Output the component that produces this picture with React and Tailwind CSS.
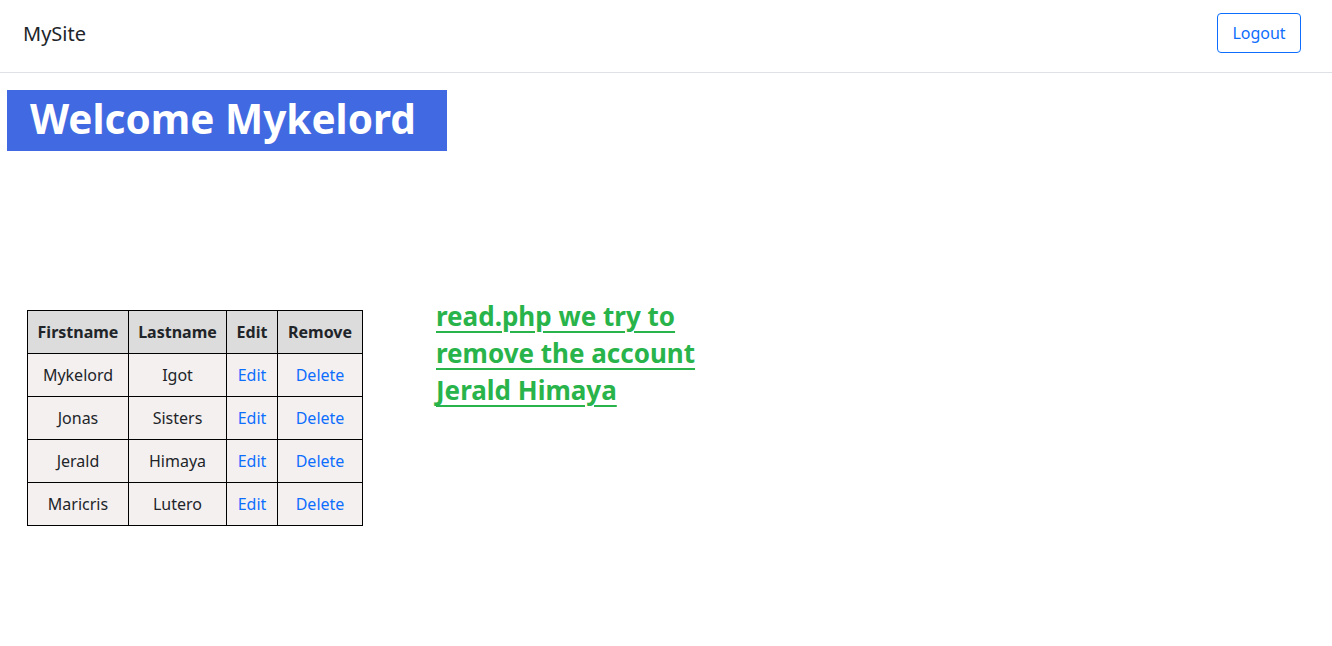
import React from 'react'

const rows = [
	['Mykelord', 'Igot'],
	['Jonas', 'Sisters'],
	['Jerald', 'Himaya'],
	['Maricris', 'Lutero'],
]

export default function App() {
	return (
		<div className="min-h-[646px] bg-white text-[#212529]" style={{ fontFamily: '"Noto Sans", "Open Sans", sans-serif' }}>
			{/* navbar */}
			<header className="flex items-start justify-between h-[73px] border-b border-[#dee2e6] pl-[23px] pr-[31px] pt-[13px]">
				<span className="text-[20px] leading-[42px]">MySite</span>
				<button className="h-[40px] w-[84px] border border-[#0d6efd] rounded-[4px] text-[#0d6efd] text-[16px]">
					Logout
				</button>
			</header>

			<div className="pt-[17px] pl-[7px]">
				<h1 className="w-[440px] h-[61px] bg-[#4169e1] text-white font-bold text-[40.5px] leading-[58px] pl-[23px]">
					Welcome Mykelord
				</h1>
			</div>

			<div className="flex items-start pl-[27px] pt-[159px] gap-[73px]">
				<table className="border-collapse text-[16px] text-center">
					<thead>
						<tr className="bg-[#dcdcdc] h-[43px] font-bold">
							<th className="border border-black w-[101px]">Firstname</th>
							<th className="border border-black w-[98px]">Lastname</th>
							<th className="border border-black w-[51px]">Edit</th>
							<th className="border border-black w-[85px]">Remove</th>
						</tr>
					</thead>
					<tbody>
						{rows.map(([first, last]) => (
							<tr key={first} className="bg-[#f5f0f0] h-[43px]">
								<td className="border border-black">{first}</td>
								<td className="border border-black">{last}</td>
								<td className="border border-black text-[#0d6efd]">Edit</td>
								<td className="border border-black text-[#0d6efd]">Delete</td>
							</tr>
						))}
					</tbody>
				</table>

				<h2 className="w-[290px] -mt-[12px] text-[26px] leading-[37px] font-bold text-[#28b44a] underline underline-offset-[5px] decoration-2">
					read.php we try to remove the account Jerald Himaya
				</h2>
			</div>
		</div>
	)
}
